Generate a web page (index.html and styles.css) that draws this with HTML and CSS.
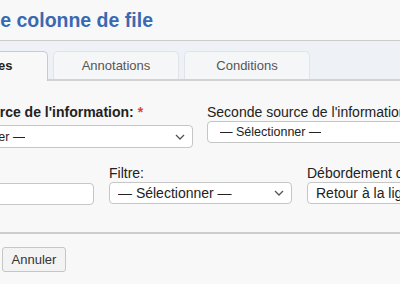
FILE: index.html
```html
<!DOCTYPE html>
<html lang="fr">
<head>
<meta charset="utf-8">
<title>Colonne de file</title>
<link rel="stylesheet" href="styles.css">
</head>
<body>
<div class="page">
  <h1 class="title">Créer une colonne de file</h1>
  <div class="tabs">
    <div class="tab tab-active">Données</div>
    <div class="tab">Annotations</div>
    <div class="tab">Conditions</div>
  </div>
  <div class="panel">
    <div class="row row-two">
      <div class="field field-first">
        <label class="label label-strong">Première source de l'information: <span class="req">*</span></label>
        <div class="select select-wide">
          <span class="select-text">— Sélectionner —</span>
          <svg class="chev" width="10" height="6" viewBox="0 0 10 6"><path d="M1 1 L5 5 L9 1" fill="none" stroke="#555" stroke-width="1.3"/></svg>
        </div>
      </div>
      <div class="field">
        <label class="label">Seconde source de l'information:</label>
        <div class="select select-wide">
          <span class="select-text">— Sélectionner —</span>
          <svg class="chev" width="10" height="6" viewBox="0 0 10 6"><path d="M1 1 L5 5 L9 1" fill="none" stroke="#555" stroke-width="1.3"/></svg>
        </div>
      </div>
    </div>
    <div class="row row-three">
      <div class="field">
        <label class="label">Largeur:</label>
        <div class="input"></div>
      </div>
      <div class="field">
        <label class="label">Filtre:</label>
        <div class="select">
          <span class="select-text">— Sélectionner —</span>
          <svg class="chev" width="10" height="6" viewBox="0 0 10 6"><path d="M1 1 L5 5 L9 1" fill="none" stroke="#555" stroke-width="1.3"/></svg>
        </div>
      </div>
      <div class="field">
        <label class="label">Débordement du texte:</label>
        <div class="select">
          <span class="select-text">Retour à la ligne</span>
          <svg class="chev" width="10" height="6" viewBox="0 0 10 6"><path d="M1 1 L5 5 L9 1" fill="none" stroke="#555" stroke-width="1.3"/></svg>
        </div>
      </div>
    </div>
  </div>
  <div class="actions">
    <button class="btn btn-primary" type="button">Enregistrer</button>
    <button class="btn" type="button">Annuler</button>
  </div>
</div>
</body>
</html>
```

FILE: styles.css
```css
html, body {
  margin: 0;
  padding: 0;
  overflow: hidden;
  background: #f8f8f8;
}

body {
  font-family: "Liberation Sans", Arial, sans-serif;
  font-size: 14px;
  color: #222;
}

.page {
  margin-left: -89px;
  width: 720px;
}

.title {
  margin: 0;
  padding: 8px 0 0 9px;
  height: 32px;
  box-sizing: border-box;
  font-size: 19.5px;
  line-height: 24px;
  font-weight: bold;
  color: #3b69b0;
}

.tabs {
  margin-top: 8px;
  display: flex;
  align-items: flex-end;
  gap: 5px;
  padding: 10px 11px 0;
  background: #eef1f6;
  border-top: 1px solid #cbcbcb;
  border-bottom: 2px solid #d2d2d2;
}

.tab {
  width: 126px;
  height: 28px;
  box-sizing: border-box;
  border: 1px solid #e0e3e7;
  border-bottom: none;
  border-radius: 5px 5px 0 0;
  background: #f5f6f8;
  font-size: 13px;
  line-height: 27px;
  text-align: center;
  color: #555;
}

.tab-active {
  height: 30px;
  margin-bottom: -2px;
  background: #f8f8f8;
  border-color: #b9cde9;
  font-weight: bold;
  color: #222;
}

.panel {
  padding-top: 22px;
  width: 579px;
}

.row {
  display: grid;
}

.row-two {
  grid-template-columns: 282px 1fr;
  column-gap: 14px;
}

.row-three {
  margin-top: 16px;
  grid-template-columns: 183px 183px 183px;
  column-gap: 15px;
}

.field {
  display: flex;
  flex-direction: column;
}

.label {
  font-size: 14px;
  line-height: 18px;
  color: #222;
}

.label-strong {
  font-weight: bold;
}

.req {
  color: #d9443a;
}

.select {
  height: 22px;
  box-sizing: border-box;
  display: flex;
  align-items: center;
  justify-content: space-between;
  padding: 0 7px 0 8px;
  background: #fff;
  border: 1px solid #c6c6c6;
  border-radius: 4px;
  font-size: 14px;
  color: #222;
  white-space: nowrap;
}

.select-wide {
  padding-left: 12px;
  font-size: 12.5px;
}

.field-first .select {
  margin-top: 4px;
  height: 23px;
}

.select-text {
  overflow: hidden;
}

.chev {
  flex: none;
}

.input {
  margin-top: 1px;
  height: 22px;
  box-sizing: border-box;
  background: #fff;
  border: 1px solid #c6c6c6;
  border-radius: 4px;
}

.actions {
  margin-top: 27px;
  border-top: 2px solid #cdcdcd;
  padding-top: 13px;
  display: flex;
  gap: 7px;
}

.btn {
  height: 25px;
  box-sizing: border-box;
  padding: 0 9px;
  font-family: "Liberation Sans", Arial, sans-serif;
  font-size: 13px;
  color: #333;
  background: #f3f3f3;
  border: 1px solid #c6c6c6;
  border-radius: 3px;
}

.btn-primary {
  color: #fff;
  background: #3b69b0;
  border-color: #335d9e;
}
```
